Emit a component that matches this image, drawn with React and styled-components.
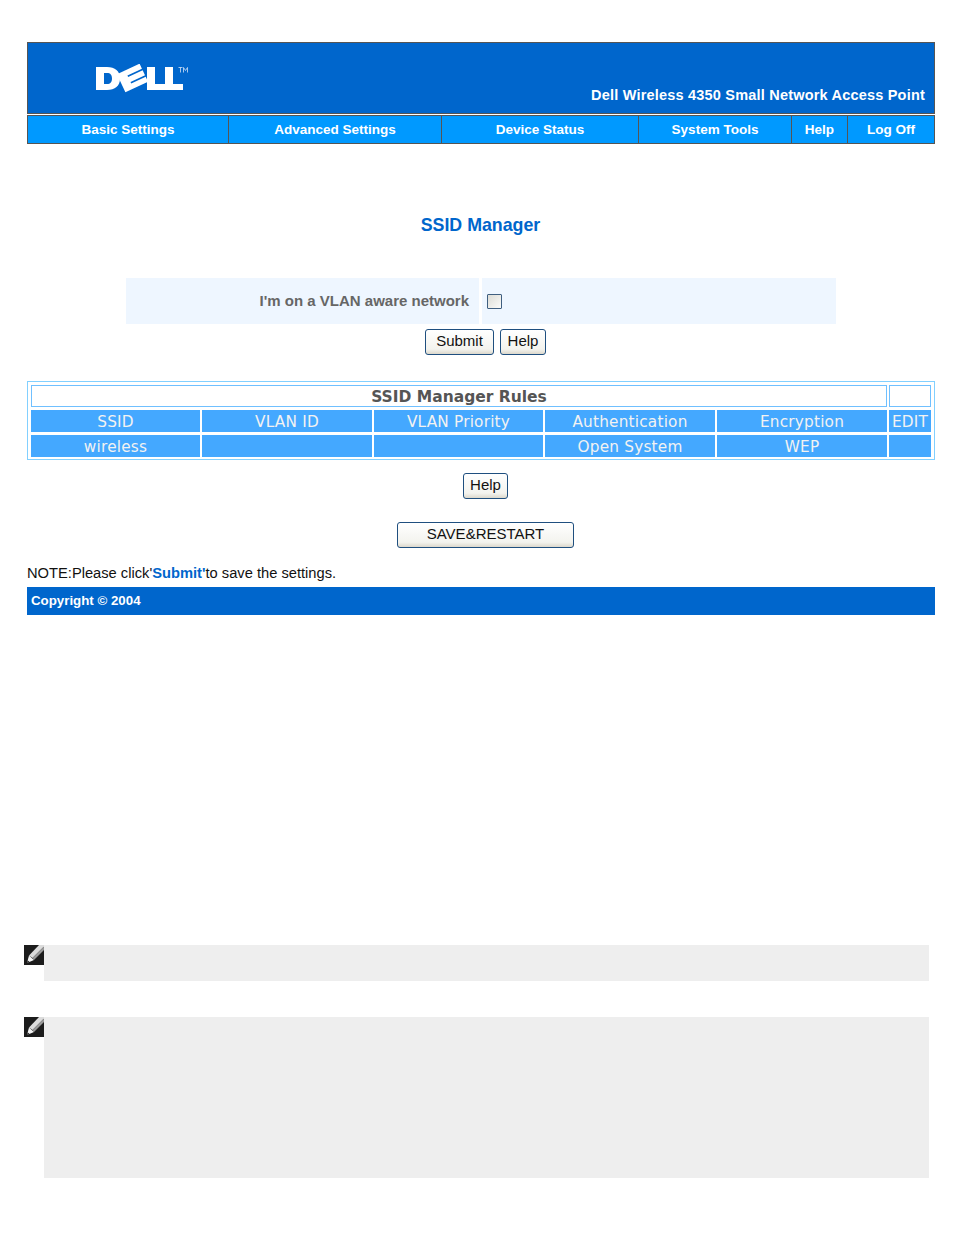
import React from 'react';
import styled, { createGlobalStyle } from 'styled-components';

const GlobalStyle = createGlobalStyle`
  html, body {
    margin: 0;
    padding: 0;
    background: #ffffff;
  }
  body {
    font-family: "Liberation Sans", Arial, sans-serif;
  }
`;

const Page = styled.div`
  width: 954px;
  height: 1235px;
  box-sizing: border-box;
  padding: 42px 19px 0 27px;
  overflow: hidden;
`;

const Banner = styled.div`
  height: 72px;
  box-sizing: border-box;
  background: #0066cc;
  border: 1px solid #555;
  display: flex;
  justify-content: space-between;
  padding: 0 9px 9px 68px;
`;

const LogoWrap = styled.div`
  padding-top: 21px;
`;

const ProductName = styled.div`
  align-self: flex-end;
  color: #fff;
  font-size: 14.5px;
  letter-spacing: 0.2px;
  font-weight: bold;
  line-height: 17px;
`;

const Nav = styled.div`
  display: flex;
  height: 29px;
  margin-top: 1px;
  box-sizing: border-box;
  background: #0099ff;
  border: 1px solid #555;
`;

const NavItem = styled.div`
  width: ${(p) => p.$w}px;
  box-sizing: border-box;
  border-right: ${(p) => (p.$last ? 'none' : '1px solid #555')};
  color: #fff;
  font-size: 13.5px;
  font-weight: bold;
  display: flex;
  align-items: center;
  justify-content: center;
`;

const Title = styled.h1`
  margin: 0 0 0 -1px;
  padding-top: 69px;
  height: 65px;
  text-align: center;
  color: #0066cc;
  font-size: 17.8px;
  line-height: 24px;
  font-weight: bold;
`;

const VlanRow = styled.div`
  display: grid;
  grid-template-columns: 353px 354px;
  gap: 3px;
  height: 46px;
  margin-left: 99px;
  width: 710px;
`;

const VlanLabel = styled.div`
  background: #eef6ff;
  color: #666;
  font-size: 15px;
  font-weight: bold;
  display: flex;
  align-items: center;
  justify-content: flex-end;
  padding: 0 10px 2px 0;
  box-sizing: border-box;
`;

const VlanCell = styled.div`
  background: #eef6ff;
  display: flex;
  align-items: center;
  padding-left: 5px;
  box-sizing: border-box;
`;

const CheckBox = styled.span`
  display: block;
  width: 15px;
  height: 15px;
  box-sizing: border-box;
  border: 1px solid #3f5f80;
  border-radius: 1px;
  background: linear-gradient(135deg, #dcdcd6, #fbfbf9);
`;

const ButtonRow = styled.div`
  display: flex;
  justify-content: center;
  gap: 6px;
  margin-top: ${(p) => p.$top}px;
  margin-left: 9px;
`;

const Button = styled.button`
  height: 26px;
  width: ${(p) => p.$w}px;
  padding: 0 0 3px;
  box-sizing: border-box;
  border: 1px solid #1f4f7f;
  border-radius: 3px;
  background: linear-gradient(#ffffff, #f3f3ee 80%, #dcd8cc);
  color: #111;
  font-family: "Liberation Sans", Arial, sans-serif;
  font-size: 15px;
`;

const RulesTable = styled.div`
  margin-top: 26px;
  height: 79px;
  box-sizing: border-box;
  border: 1px solid #82d0ff;
  padding: 3px;
  display: grid;
  grid-template-columns: 169px 170px 169px 170px 170px 42px;
  grid-auto-rows: 22px;
  gap: 3px 2px;
  font-family: "DejaVu Sans", Verdana, sans-serif;
`;

const TitleCell = styled.div`
  grid-column: span ${(p) => p.$span || 1};
  box-sizing: border-box;
  border: 1px solid #70c0ff;
  background: #fff;
  color: #555;
  font-size: 15.5px;
  font-weight: bold;
  line-height: 22px;
  text-align: center;
`;

const Cell = styled.div`
  background: #44a8ff;
  color: #f2f2f2;
  font-size: 15.3px;
  letter-spacing: 0.2px;
  line-height: 24px;
  text-align: center;
  white-space: nowrap;
  overflow: hidden;
`;

const Note = styled.div`
  margin-top: 16px;
  font-size: 14.7px;
  line-height: 18px;
  color: #111;
`;

const NoteLink = styled.span`
  color: #0066cc;
  font-weight: bold;
`;

const Footer = styled.div`
  margin-top: 5px;
  height: 28px;
  background: #0066cc;
  color: #fff;
  font-size: 13.3px;
  font-weight: bold;
  line-height: 27px;
  padding-left: 4px;
`;

const Callout = styled.div`
  display: flex;
  margin-left: -3px;
  width: 905px;
  margin-top: ${(p) => p.$top}px;
`;

const CalloutBody = styled.div`
  flex: 1;
  height: ${(p) => p.$h}px;
  background: #eeeeee;
`;

const DellLogo = () => (
  <svg width="94" height="29" viewBox="96 64 94 29" style={{ display: 'block' }}>
    <path
      fill="#fff"
      fillRule="evenodd"
      d="M96 67h11c8 0 13 4 13 11.500s-5 11.500-13 11.500H96zM104 73v11h3c3.500 0 5-2 5-5.500s-1.500-5.500-5-5.500z"
    />
    <path
      fill="#fff"
      transform="rotate(-25 132.500 78)"
      d="M120 68h25v5.500h-16v1.700h16v5.600h-16v1.700h16v5.500h-25z"
    />
    <path fill="#fff" d="M147 67h8v17h10v6h-18zM165 67h8v17h10v6h-18z" />
    <path
      fill="none"
      stroke="#cfe0f5"
      strokeWidth=".8"
      d="M178.500 67.500h4M180.500 67.500v5M183.500 72.500v-5l2 3 2-3v5"
    />
  </svg>
);

const NoteIcon = () => (
  <svg width="20" height="20" viewBox="0 0 20 20" style={{ display: 'block', flex: 'none' }}>
    <rect width="20" height="20" fill="#1c1c1c" />
    <path fill="#dcdcdc" d="M5 10.500 15 0h5v1.500L8.500 13z" />
    <path fill="#9a9a9a" d="M8.500 13 20 1.500V5L10 15z" />
    <path fill="#f4f4f4" d="M5 10.500 10 15 3 18z" />
    <path fill="#111" d="M3.800 15.500 5.500 17 3 18z" />
  </svg>
);

const navItems = [
  ['Basic Settings', 201],
  ['Advanced Settings', 213],
  ['Device Status', 197],
  ['System Tools', 153],
  ['Help', 56],
  ['Log Off', 86],
];

const headers = ['SSID', 'VLAN ID', 'VLAN Priority', 'Authentication', 'Encryption', 'EDIT'];
const rowData = ['wireless', '', '', 'Open System', 'WEP', ''];

const App = () => (
  <Page>
    <GlobalStyle />
    <Banner>
      <LogoWrap>
        <DellLogo />
      </LogoWrap>
      <ProductName>Dell Wireless 4350 Small Network Access Point</ProductName>
    </Banner>
    <Nav>
      {navItems.map(([label, w], i) => (
        <NavItem key={label} $w={w} $last={i === navItems.length - 1}>
          {label}
        </NavItem>
      ))}
    </Nav>

    <Title>SSID Manager</Title>

    <VlanRow>
      <VlanLabel>I'm on a VLAN aware network</VlanLabel>
      <VlanCell>
        <CheckBox />
      </VlanCell>
    </VlanRow>
    <ButtonRow $top={5}>
      <Button $w={69}>Submit</Button>
      <Button $w={46}>Help</Button>
    </ButtonRow>

    <RulesTable>
      <TitleCell $span={5}>SSID Manager Rules</TitleCell>
      <TitleCell />
      {headers.map((h) => (
        <Cell key={h}>{h}</Cell>
      ))}
      {rowData.map((v, i) => (
        <Cell key={i}>{v}</Cell>
      ))}
    </RulesTable>

    <ButtonRow $top={13}>
      <Button $w={45}>Help</Button>
    </ButtonRow>
    <ButtonRow $top={23}>
      <Button $w={177}>SAVE&amp;RESTART</Button>
    </ButtonRow>

    <Note>
      NOTE:Please click'<NoteLink>Submit'</NoteLink>to save the settings.
    </Note>
    <Footer>Copyright © 2004</Footer>

    <Callout $top={330}>
      <NoteIcon />
      <CalloutBody $h={36} />
    </Callout>
    <Callout $top={36}>
      <NoteIcon />
      <CalloutBody $h={161} />
    </Callout>
  </Page>
);

export default App;
